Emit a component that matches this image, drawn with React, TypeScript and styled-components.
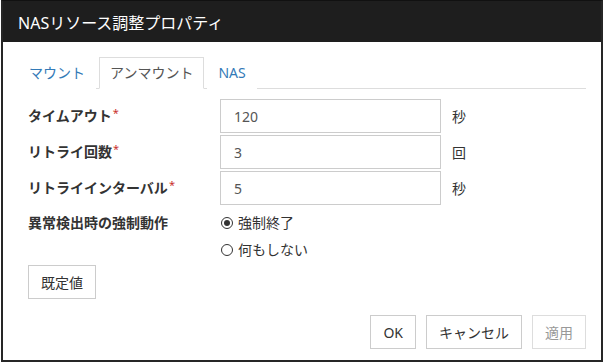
import React from "react"
import styled, { createGlobalStyle } from "styled-components"

const GlobalStyle = createGlobalStyle`
  html, body {
    margin: 0;
    padding: 0;
    background: #ffffff;
  }
  body {
    font-family: "Noto Sans", "Noto Sans CJK JP", sans-serif;
    font-size: 14px;
    color: #333;
  }
`

const tabs = [
  { label: "マウント", active: false },
  { label: "アンマウント", active: true },
  { label: "NAS", active: false },
]

const fields = [
  { label: "タイムアウト", value: "120", unit: "秒" },
  { label: "リトライ回数", value: "3", unit: "回" },
  { label: "リトライインターバル", value: "5", unit: "秒" },
]

const App = () => {
  return (
    <>
      <GlobalStyle />
      <Dialog>
        <Header>
          <Title>NASリソース調整プロパティ</Title>
        </Header>
        <Body>
          <TabBar>
            {tabs.map((t) => (
              <Tab key={t.label} $active={t.active}>
                {t.label}
              </Tab>
            ))}
          </TabBar>
          <Form>
            {fields.map((f) => (
              <FieldRow key={f.label}>
                <Label>
                  {f.label}
                  <Required>*</Required>
                </Label>
                <Input>{f.value}</Input>
                <Unit>{f.unit}</Unit>
              </FieldRow>
            ))}
            <RadioRow>
              <Label>異常検出時の強制動作</Label>
              <RadioGroup>
                <RadioOption>
                  <RadioCircle $checked />
                  強制終了
                </RadioOption>
                <RadioOption>
                  <RadioCircle />
                  何もしない
                </RadioOption>
              </RadioGroup>
            </RadioRow>
            <DefaultRow>
              <Button>既定値</Button>
            </DefaultRow>
          </Form>
          <Footer>
            <Button>OK</Button>
            <Button>キャンセル</Button>
            <Button $disabled>適用</Button>
          </Footer>
        </Body>
      </Dialog>
    </>
  )
}

const Dialog = styled.div`
  box-sizing: border-box;
  width: 602px;
  height: 362px;
  margin-left: 1px;
  border: 2px solid #262626;
  border-top: 1px solid #111;
  background: #fff;
  display: flex;
  flex-direction: column;
`

const Header = styled.div`
  height: 41px;
  background: #1e1e1e;
  display: flex;
  align-items: center;
  padding-left: 15px;
`

const Title = styled.h1`
  margin: 0;
  font-size: 16px;
  font-weight: normal;
  color: #fff;
  line-height: 20px;
  padding-top: 2px;
`

const Body = styled.div`
  padding: 15px 15px 0 15px;
  display: flex;
  flex-direction: column;
`

const TabBar = styled.div`
  display: flex;
  border-bottom: 1px solid #ddd;
  height: 31px;
`

const Tab = styled.div<{ $active?: boolean }>`
  box-sizing: border-box;
  height: 32px;
  padding: 0 10px;
  display: flex;
  align-items: center;
  line-height: 20px;
  margin-right: 3px;
  color: ${(p) => (p.$active ? "#555" : "#337ab7")};
  background: #fff;
  border: 1px solid ${(p) => (p.$active ? "#ddd" : "transparent")};
  border-bottom-color: ${(p) => (p.$active ? "#fff" : "transparent")};
`

const Form = styled.div`
  padding: 10px 0 0 10px;
  display: flex;
  flex-direction: column;
`

const FieldRow = styled.div`
  display: flex;
  align-items: center;
  margin-bottom: 2px;
`

const Label = styled.div`
  width: 192px;
  font-weight: bold;
  color: #333;
  line-height: 20px;
`

const Required = styled.span`
  color: #c9302c;
  font-size: 11px;
  font-weight: normal;
  vertical-align: top;
  position: relative;
  top: -3px;
  margin-left: 1px;
`

const Input = styled.div`
  box-sizing: border-box;
  width: 221px;
  height: 34px;
  border: 1px solid #ccc;
  padding: 0 13px;
  display: flex;
  align-items: center;
  color: #555;
  font-size: 14px;
`

const Unit = styled.div`
  margin-left: 11px;
  color: #333;
`

const RadioRow = styled.div`
  display: flex;
  align-items: flex-start;
  margin-top: 6px;
`

const RadioGroup = styled.div`
  display: flex;
  flex-direction: column;
  gap: 7px;
  margin-left: 1px;
`

const RadioOption = styled.label`
  display: flex;
  align-items: center;
  gap: 5px;
  line-height: 20px;
  color: #333;
`

const RadioCircle = styled.span<{ $checked?: boolean }>`
  box-sizing: border-box;
  width: 12px;
  height: 12px;
  border: 1px solid #333;
  border-radius: 50%;
  display: flex;
  align-items: center;
  justify-content: center;
  &::after {
    content: "";
    width: 6px;
    height: 6px;
    border-radius: 50%;
    background: ${(p) => (p.$checked ? "#333" : "transparent")};
  }
`

const DefaultRow = styled.div`
  display: flex;
  margin-top: 5px;
`

const Button = styled.button<{ $disabled?: boolean }>`
  box-sizing: border-box;
  height: 34px;
  padding: 0 12px;
  border: 1px solid ${(p) => (p.$disabled ? "#ddd" : "#ccc")};
  background: #fff;
  color: ${(p) => (p.$disabled ? "#999" : "#333")};
  font-family: inherit;
  font-size: 14px;
  border-radius: 0;
`

const Footer = styled.div`
  display: flex;
  justify-content: flex-end;
  gap: 10px;
  margin-top: 16px;
`

export default App
